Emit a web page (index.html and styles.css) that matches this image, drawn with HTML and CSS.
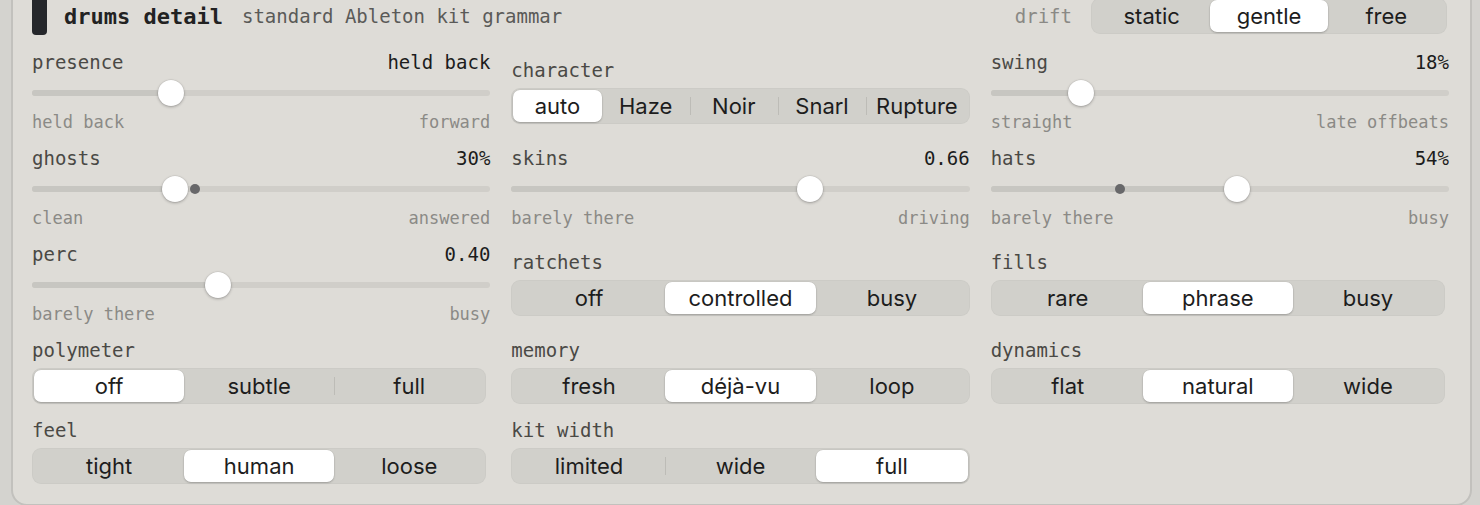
FILE: index.html
```html
<!DOCTYPE html>
<html>
 <head>
  <meta charset="utf-8">
  <title>drums detail</title>
  <link rel="stylesheet" href="styles.css">
 </head>
 <body>
  <div class="panel">
   <div class="head">
    <span class="grip"></span>
    <span class="title">drums detail</span>
    <span class="subtitle">standard Ableton kit grammar</span>
    <span class="drift-label">drift</span>
    <div class="segs drift">
     <span class="seg">static</span><span class="seg on">gentle</span><span class="seg">free</span>
    </div>
   </div>

   <div class="grid">
    <!-- row 1 -->
    <div class="ctl">
     <div class="line"><span class="name">presence</span><span class="value">held back</span></div>
     <div class="track" style="--v:0.292"><span class="fill"></span><span class="knob"></span></div>
     <div class="ends"><span>held back</span><span>forward</span></div>
    </div>
    <div class="ctl">
     <div class="line"><span class="name">character</span></div>
     <div class="segs">
      <span class="seg on">auto</span><span class="seg">Haze</span><span class="seg">Noir</span><span class="seg">Snarl</span><span class="seg">Rupture</span>
     </div>
    </div>
    <div class="ctl">
     <div class="line"><span class="name">swing</span><span class="value">18%</span></div>
     <div class="track" style="--v:0.18"><span class="fill"></span><span class="knob"></span></div>
     <div class="ends"><span>straight</span><span>late offbeats</span></div>
    </div>

    <!-- row 2 -->
    <div class="ctl">
     <div class="line"><span class="name">ghosts</span><span class="value">30%</span></div>
     <div class="track" style="--v:0.30"><span class="fill"></span><span class="mark" style="--m:0.347"></span><span class="knob"></span></div>
     <div class="ends"><span>clean</span><span>answered</span></div>
    </div>
    <div class="ctl">
     <div class="line"><span class="name">skins</span><span class="value">0.66</span></div>
     <div class="track" style="--v:0.66"><span class="fill"></span><span class="knob"></span></div>
     <div class="ends"><span>barely there</span><span>driving</span></div>
    </div>
    <div class="ctl">
     <div class="line"><span class="name">hats</span><span class="value">54%</span></div>
     <div class="track" style="--v:0.54"><span class="fill"></span><span class="mark" style="--m:0.27"></span><span class="knob"></span></div>
     <div class="ends"><span>barely there</span><span>busy</span></div>
    </div>

    <!-- row 3 -->
    <div class="ctl">
     <div class="line"><span class="name">perc</span><span class="value">0.40</span></div>
     <div class="track" style="--v:0.40"><span class="fill"></span><span class="knob"></span></div>
     <div class="ends"><span>barely there</span><span>busy</span></div>
    </div>
    <div class="ctl">
     <div class="line"><span class="name">ratchets</span></div>
     <div class="segs">
      <span class="seg">off</span><span class="seg on">controlled</span><span class="seg">busy</span>
     </div>
    </div>
    <div class="ctl">
     <div class="line"><span class="name">fills</span></div>
     <div class="segs short">
      <span class="seg">rare</span><span class="seg on">phrase</span><span class="seg">busy</span>
     </div>
    </div>

    <!-- row 4 -->
    <div class="ctl">
     <div class="line"><span class="name">polymeter</span></div>
     <div class="segs short">
      <span class="seg on">off</span><span class="seg">subtle</span><span class="seg">full</span>
     </div>
    </div>
    <div class="ctl">
     <div class="line"><span class="name">memory</span></div>
     <div class="segs">
      <span class="seg">fresh</span><span class="seg on">déjà-vu</span><span class="seg">loop</span>
     </div>
    </div>
    <div class="ctl">
     <div class="line"><span class="name">dynamics</span></div>
     <div class="segs short">
      <span class="seg">flat</span><span class="seg on">natural</span><span class="seg">wide</span>
     </div>
    </div>

    <!-- row 5 -->
    <div class="ctl">
     <div class="line"><span class="name">feel</span></div>
     <div class="segs short">
      <span class="seg">tight</span><span class="seg on">human</span><span class="seg">loose</span>
     </div>
    </div>
    <div class="ctl">
     <div class="line"><span class="name">kit width</span></div>
     <div class="segs">
      <span class="seg">limited</span><span class="seg">wide</span><span class="seg on">full</span>
     </div>
    </div>
   </div>
  </div>
 </body>
</html>
```

FILE: styles.css
```css
html, body {
    margin: 0;
    height: 100%;
    overflow: hidden;
}
body {
    background: #d4d3cf;
    font-family: "DejaVu Sans Mono", "Liberation Mono", monospace;
    color: #222;
}

.panel {
    margin: -20px 8px 0 11px;
    padding: 15px 21px 20px 19px;
    background: #dedcd7;
    border: 2px solid #c2c1bd;
    border-radius: 0 0 16px 16px;
}

/* header */
.head {
    display: flex;
    align-items: center;
    height: 38px;
}
.grip {
    align-self: stretch;
    width: 15px;
    background: #25272b;
    border-radius: 0 0 4px 4px;
}
.title {
    margin-left: 17px;
    font-size: 22px;
    font-weight: bold;
    color: #222;
}
.subtitle {
    margin-left: 19px;
    font-size: 19px;
    color: #5a5a58;
}
.drift-label {
    margin-left: auto;
    margin-right: 19px;
    font-size: 19px;
    color: #8a8985;
}
.segs.drift {
    width: 356px;
    margin-right: 2px;
}

/* control grid */
.grid {
    display: grid;
    grid-template-columns: repeat(3, 1fr);
    column-gap: 21px;
    row-gap: 14px;
    align-items: center;
    margin-top: 15px;
}
.line {
    display: flex;
    justify-content: space-between;
    height: 24px;
    line-height: 24px;
    font-size: 19px;
}
.name { color: #4a4945; }
.value { color: #1c1c1c; }

/* slider */
.track {
    position: relative;
    height: 26px;
    margin-top: 6px;
}
.track::before {
    content: "";
    position: absolute;
    left: 0;
    right: 0;
    top: 10px;
    height: 6px;
    border-radius: 3px;
    background: #d0cec9;
}
.fill {
    position: absolute;
    left: 0;
    top: 10px;
    height: 6px;
    border-radius: 3px;
    width: calc(13px + var(--v) * (100% - 26px));
    background: #c7c6c1;
}
.mark {
    position: absolute;
    top: 8px;
    width: 10px;
    height: 10px;
    border-radius: 50%;
    background: #68686a;
    left: calc(8px + var(--m) * (100% - 26px));
}
.knob {
    position: absolute;
    top: 0;
    width: 26px;
    height: 26px;
    border-radius: 50%;
    background: #fff;
    box-shadow: 0 1px 3px rgba(0, 0, 0, 0.28), 0 0 0 0.5px rgba(0, 0, 0, 0.08);
    left: calc(var(--v) * (100% - 26px));
}
.ends {
    display: flex;
    justify-content: space-between;
    margin-top: 6px;
    height: 20px;
    line-height: 20px;
    font-size: 17px;
    color: #8b8a86;
}

/* segmented control */
.segs {
    display: flex;
    height: 36px;
    margin-top: 6px;
    padding: 2px;
    box-sizing: border-box;
    background: #d1d0cb;
    border-radius: 9px;
    box-shadow: inset 0 0 0 1px rgba(0, 0, 0, 0.025);
}
.head .segs { margin-top: 0; }
.segs.short { margin-right: 4px; }
.seg {
    position: relative;
    flex: 1 1 0;
    padding: 0 10px;
    white-space: nowrap;
    text-align: center;
    line-height: 32px;
    font-family: Inter, "Liberation Sans", sans-serif;
    font-size: 22px;
    color: #1d1d1d;
    border-radius: 7px;
}
.seg + .seg::before {
    content: "";
    position: absolute;
    left: 0;
    top: 7px;
    height: 18px;
    width: 1px;
    background: #bdbcb7;
}
.seg.on + .seg::before,
.seg.on::before {
    display: none;
}
.seg.on {
    background: #fff;
    box-shadow: 0 1px 2px rgba(0, 0, 0, 0.22), 0 0 0 0.5px rgba(0, 0, 0, 0.06);
}
```
